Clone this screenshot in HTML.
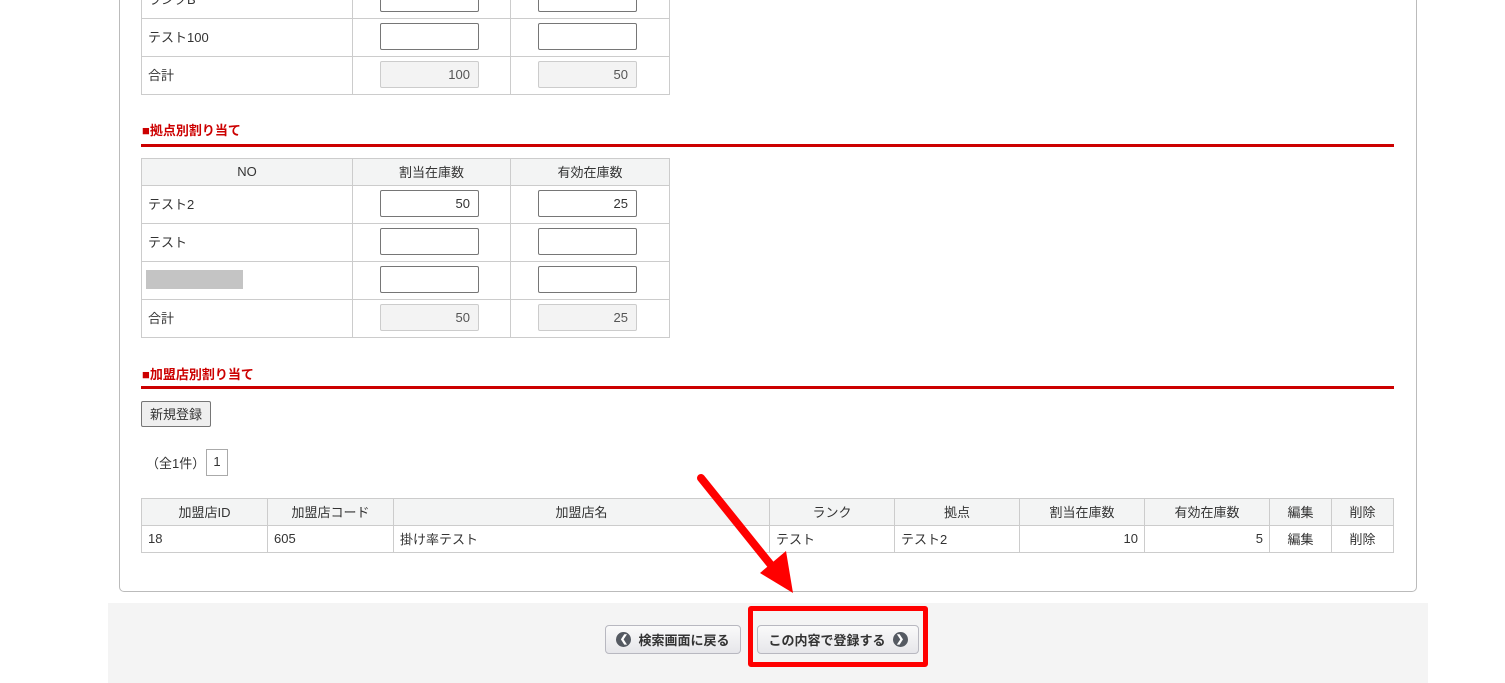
<!DOCTYPE html>
<html><head><meta charset="utf-8"><style>
*{box-sizing:border-box;margin:0;padding:0}
body{width:1505px;height:683px;overflow:hidden;background:#fff;font-family:"Liberation Sans","Noto Sans CJK JP",sans-serif;font-size:13px;color:#333;position:relative}
.abs{position:absolute}
table{border-collapse:collapse;position:absolute;table-layout:fixed}
td,th{border:1px solid #ccc;font-weight:normal;padding:0 6px 2px}
th{background:#f3f4f4;text-align:center}
.inp{display:inline-block;width:99px;height:27px;border:1px solid #767676;border-radius:2px;background:#fff;text-align:right;padding:5px 8px 0 0;vertical-align:middle}
.inp.ro{background:#f3f3f3;border-color:#ccc;color:#555}
.c{padding-left:27px}
.cc{text-align:center}
.h{color:#cc0000;font-weight:bold;font-size:13px}
.line{height:3px;background:#cc0000}
.btn{position:absolute;height:29px;border:1px solid #b8b8c0;border-radius:4px;background:linear-gradient(#fafafa,#e6e6ea);font-weight:bold;font-size:13px;color:#333;display:flex;align-items:center;justify-content:center;gap:7px}
.ic{width:15px;height:15px;border-radius:50%;background:#555a62;color:#fff;font-size:10px;display:flex;align-items:center;justify-content:center;line-height:1}
</style></head><body>
<div class="abs" style="left:119px;top:-10px;width:1298px;height:602px;border:1px solid #bbb;border-radius:5px"></div>
<table style="left:141px;top:-20px;width:528px">
<colgroup><col style="width:211px"><col style="width:158px"><col style="width:159px"></colgroup>
<tr style="height:38px"><td>ランクB</td><td class="c"><span class="inp"></span></td><td class="c"><span class="inp"></span></td></tr>
<tr style="height:38px"><td>テスト100</td><td class="c"><span class="inp"></span></td><td class="c"><span class="inp"></span></td></tr>
<tr style="height:38px"><td>合計</td><td class="c"><span class="inp ro">100</span></td><td class="c"><span class="inp ro">50</span></td></tr>
</table>
<div class="abs h" style="left:142px;top:120px">■拠点別割り当て</div>
<div class="abs line" style="left:141px;top:144px;width:1253px"></div>
<table style="left:141px;top:158px;width:528px">
<colgroup><col style="width:211px"><col style="width:158px"><col style="width:159px"></colgroup>
<tr style="height:27px"><th>NO</th><th>割当在庫数</th><th>有効在庫数</th></tr>
<tr style="height:38px"><td>テスト2</td><td class="c"><span class="inp">50</span></td><td class="c"><span class="inp">25</span></td></tr>
<tr style="height:38px"><td>テスト</td><td class="c"><span class="inp"></span></td><td class="c"><span class="inp"></span></td></tr>
<tr style="height:38px"><td><span style="display:inline-block;width:97px;height:19px;background:#c4c4c4;margin-left:-2px;vertical-align:middle"></span></td><td class="c"><span class="inp"></span></td><td class="c"><span class="inp"></span></td></tr>
<tr style="height:38px"><td>合計</td><td class="c"><span class="inp ro">50</span></td><td class="c"><span class="inp ro">25</span></td></tr>
</table>
<div class="abs h" style="left:142px;top:364px">■加盟店別割り当て</div>
<div class="abs line" style="left:141px;top:386px;width:1253px"></div>
<div class="abs" style="left:141px;top:401px;width:70px;height:26px;border:1px solid #767676;border-radius:2px;background:#efefef;display:flex;align-items:center;justify-content:center;padding-bottom:2px">新規登録</div>
<div class="abs" style="left:146px;top:453px">（全1件）</div>
<div class="abs" style="left:206px;top:449px;width:22px;height:27px;border:1px solid #aaa;display:flex;align-items:center;justify-content:center;padding-bottom:2px">1</div>
<table style="left:141px;top:498px;width:1253px">
<colgroup><col style="width:126px"><col style="width:126px"><col style="width:376px"><col style="width:125px"><col style="width:125px"><col style="width:125px"><col style="width:125px"><col style="width:62px"><col style="width:62px"></colgroup>
<tr style="height:27px"><th>加盟店ID</th><th>加盟店コード</th><th>加盟店名</th><th>ランク</th><th>拠点</th><th>割当在庫数</th><th>有効在庫数</th><th>編集</th><th>削除</th></tr>
<tr style="height:27px"><td>18</td><td>605</td><td>掛け率テスト</td><td>テスト</td><td>テスト2</td><td style="text-align:right">10</td><td style="text-align:right">5</td><td class="cc">編集</td><td class="cc">削除</td></tr>
</table>
<div class="abs" style="left:108px;top:603px;width:1320px;height:80px;background:#f4f4f4"></div>
<div class="btn" style="left:605px;top:625px;width:136px"><span class="ic">&#10094;</span>検索画面に戻る</div>
<div class="btn" style="left:757px;top:625px;width:162px">この内容で登録する<span class="ic">&#10095;</span></div>
<div class="abs" style="left:748px;top:606px;width:180px;height:61px;border:5px solid #ff0000;border-radius:3px"></div>
<svg class="abs" style="left:0;top:0" width="1505" height="683"><line x1="701" y1="478" x2="775" y2="570" stroke="#ff0000" stroke-width="8" stroke-linecap="round"/><polygon points="793,593 760,573 786,551" fill="#ff0000"/></svg>
</body></html>
